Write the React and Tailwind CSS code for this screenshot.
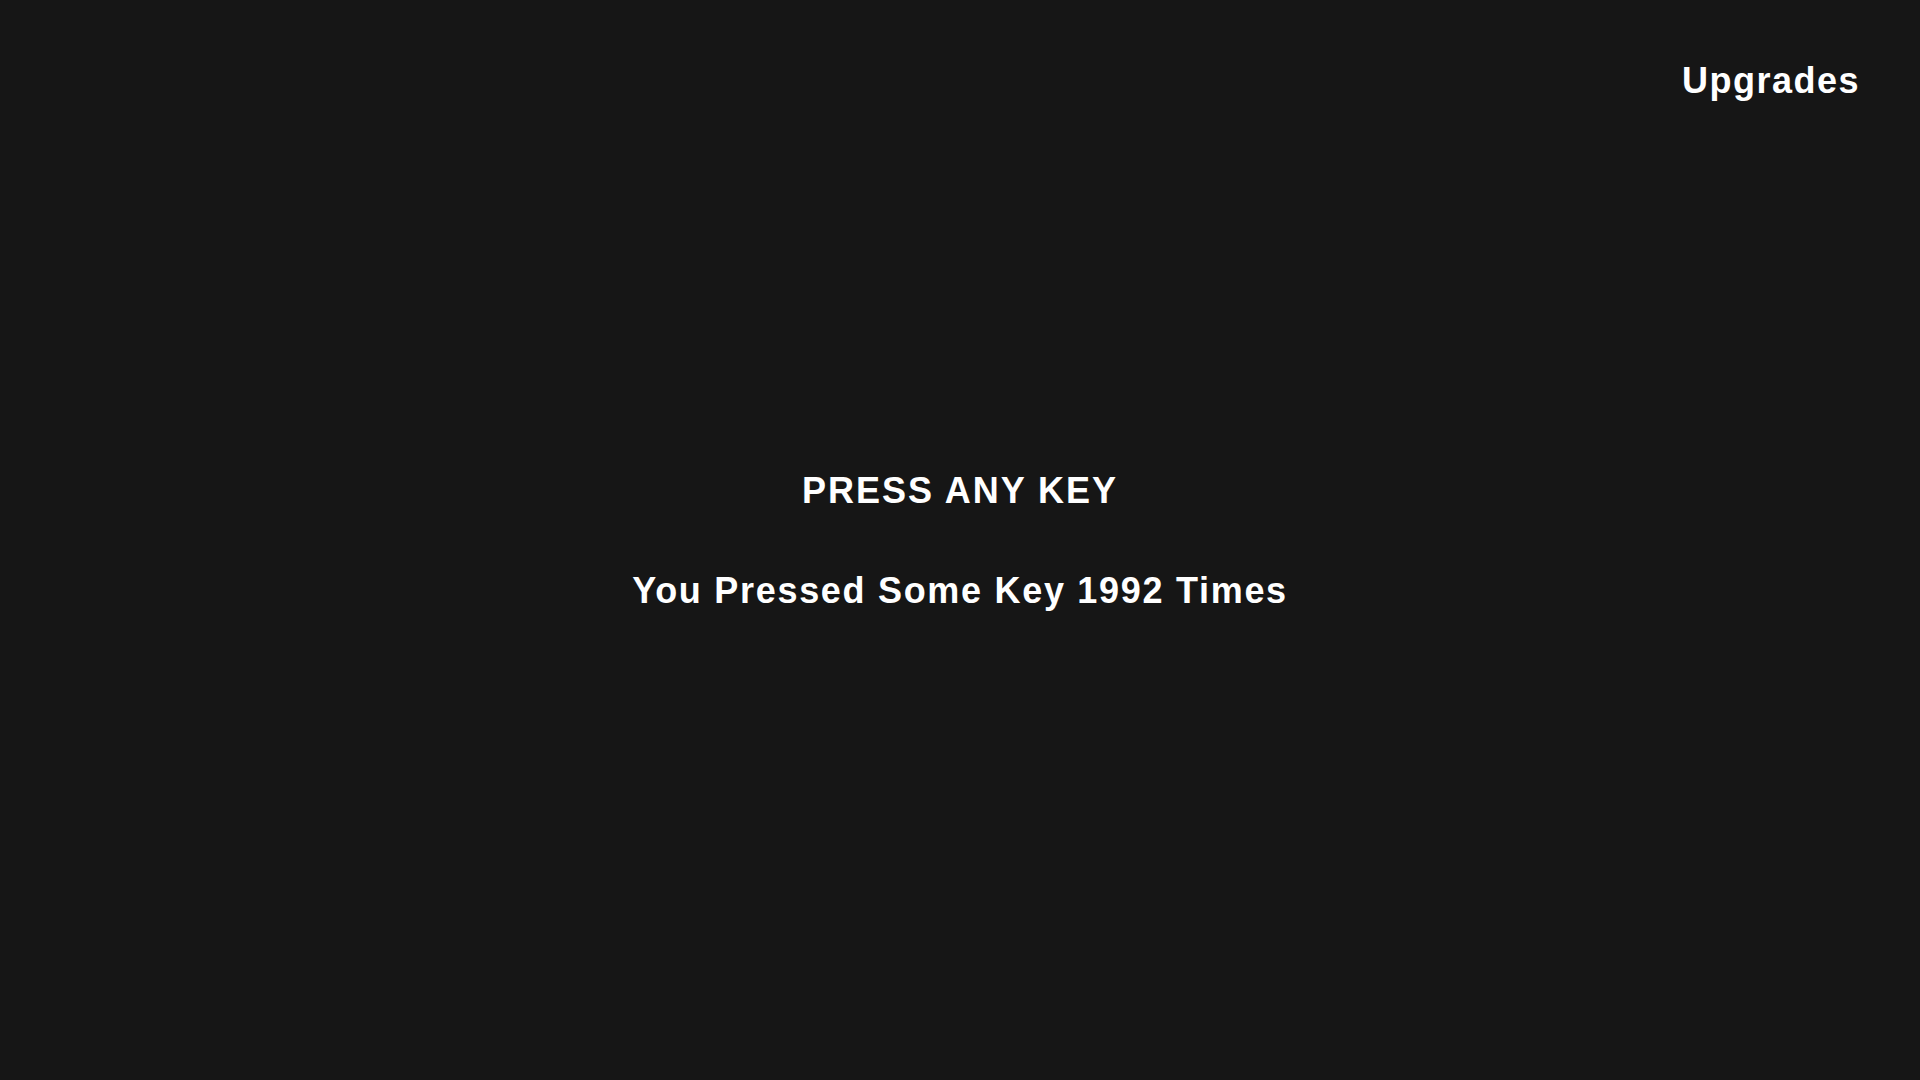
import { useEffect, useState } from 'react';

export default function App() {
  const [count, setCount] = useState(1992);

  useEffect(() => {
    const onKey = () => setCount((value) => value + 1);
    window.addEventListener('keydown', onKey);
    return () => window.removeEventListener('keydown', onKey);
  }, []);

  return (
    <div className="grid h-screen w-full grid-rows-[1fr_auto_1fr] bg-[#161616] font-['Liberation_Sans',Arial,sans-serif] font-bold text-white">
      <header className="flex items-start justify-end pr-[60px] pt-[61px]">
        <button type="button" className="text-[36px] leading-[40px] tracking-[1.5px] text-white">
          Upgrades
        </button>
      </header>

      <main className="flex flex-col items-center gap-[60px] pt-[1px] text-center tracking-[1.7px]">
        <h1 className="text-[36px] leading-[40px] tracking-[2px]">PRESS ANY KEY</h1>
        <p className="text-[36px] leading-[40px]">You Pressed Some Key {count} Times</p>
      </main>

      <div />
    </div>
  );
}
